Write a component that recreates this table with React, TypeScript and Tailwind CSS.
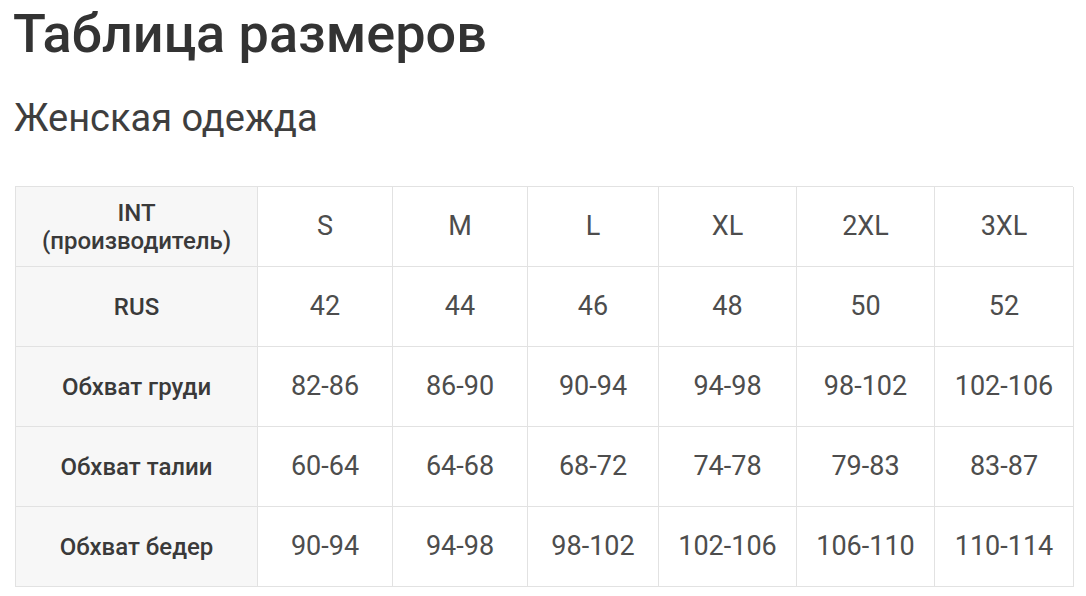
const sizes = ["S", "M", "L", "XL", "2XL", "3XL"];

const rows: { label: string; values: string[] }[] = [
  { label: "RUS", values: ["42", "44", "46", "48", "50", "52"] },
  { label: "Обхват груди", values: ["82-86", "86-90", "90-94", "94-98", "98-102", "102-106"] },
  { label: "Обхват талии", values: ["60-64", "64-68", "68-72", "74-78", "79-83", "83-87"] },
  { label: "Обхват бедер", values: ["90-94", "94-98", "98-102", "102-106", "106-110", "110-114"] },
];

function LabelCell({ children }: { children: React.ReactNode }) {
  return (
    <div className="flex h-[80px] items-center justify-center border-b border-r border-[#e2e2e2] bg-[#f7f7f7] text-center text-[24px] font-medium leading-[28px] text-[#3a3a3a]">
      {children}
    </div>
  );
}

function ValueCell({ children }: { children: React.ReactNode }) {
  return (
    <div className="flex h-[80px] items-center justify-center border-b border-r border-[#e2e2e2] bg-white text-[27px] text-[#4d4d4d]">
      {children}
    </div>
  );
}

export default function App() {
  return (
    <div className="h-[596px] w-[1086px] overflow-hidden bg-white font-['Roboto',sans-serif]">
      <h1 className="pl-[13px] pt-[3px] text-[54px] leading-[62px] font-medium text-[#333]">
        Таблица размеров
      </h1>
      <h2 className="pl-[14px] pt-[30px] text-[38px] leading-[46px] font-normal text-[#3e3e3e]">
        Женская одежда
      </h2>

      <div className="ml-[15px] mt-[45px] grid w-[1058px] grid-cols-[242px_135px_135px_131px_138px_138px_139px] border-l border-t border-[#e2e2e2]">
        <LabelCell>
          <span>
            INT
            <br />
            (производитель)
          </span>
        </LabelCell>
        {sizes.map((s) => (
          <ValueCell key={s}>{s}</ValueCell>
        ))}

        {rows.map((row) => (
          <div key={row.label} className="contents">
            <LabelCell>{row.label}</LabelCell>
            {row.values.map((v, i) => (
              <ValueCell key={i}>{v}</ValueCell>
            ))}
          </div>
        ))}
      </div>
    </div>
  );
}
